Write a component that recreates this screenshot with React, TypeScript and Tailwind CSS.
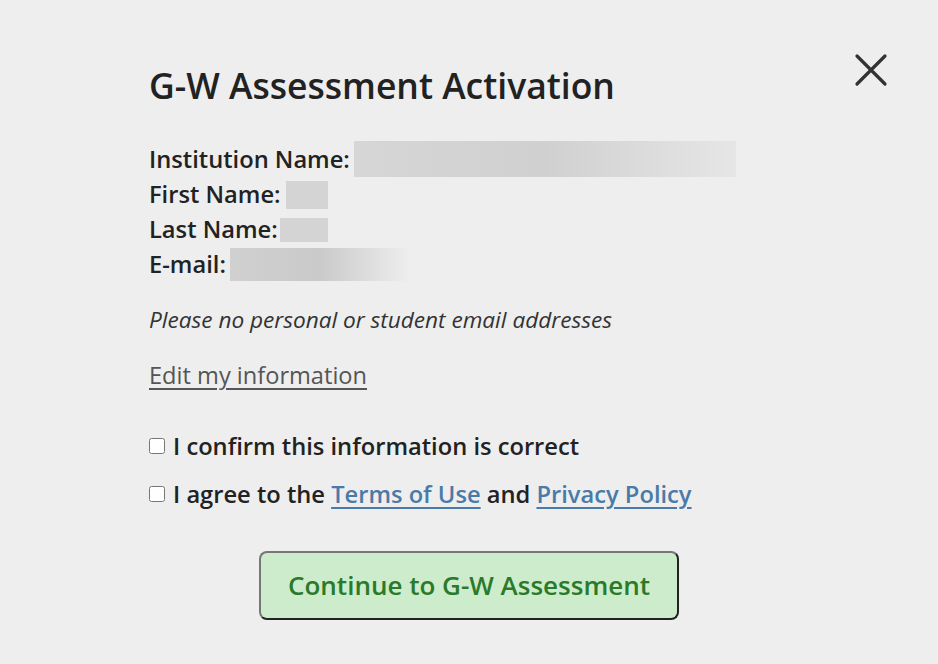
import React from 'react';

export default function App() {
  return (
    <div className="w-[938px] h-[664px] bg-[#eeeeee] text-[#222] font-['Open_Sans',sans-serif] relative overflow-hidden">
      <button className="absolute top-[52px] right-[49px] w-[36px] h-[36px] flex items-center justify-center" aria-label="Close">
        <svg width="34" height="34" viewBox="0 0 34 34" fill="none" stroke="#333" strokeWidth="3.2" strokeLinecap="round">
          <path d="M3 3 L31 31 M31 3 L3 31" />
        </svg>
      </button>

      <div className="pl-[149px] pt-[63px] flex flex-col">
        <h1 className="text-[35.5px] font-semibold leading-[44px] text-[#222]">G-W Assessment Activation</h1>

        <div className="mt-[34px] flex flex-col text-[23.7px] font-semibold leading-[35px]">
          <div className="flex items-center">
            <span>Institution Name:</span>
            <span className="ml-[4px] w-[382px] h-[36px] bg-gradient-to-r from-[#d6d6d6] via-[#d0d0d0] to-[#e6e6e6]" />
          </div>
          <div className="flex items-center">
            <span>First Name:</span>
            <span className="ml-[5px] w-[42px] h-[28px] bg-[#d4d4d4]" />
          </div>
          <div className="flex items-center">
            <span>Last Name:</span>
            <span className="ml-[2px] w-[48px] h-[24px] bg-[#d4d4d4]" />
          </div>
          <div className="flex items-center">
            <span>E-mail:</span>
            <span className="ml-[4px] w-[180px] h-[33px] bg-gradient-to-r from-[#d0d0d0] via-[#cacaca] to-[#eeeeee]" />
          </div>
        </div>

        <p className="mt-[24px] text-[22.6px] italic leading-[28px] text-[#333]">Please no personal or student email addresses</p>

        <a href="#" className="mt-[26px] text-[23.6px] leading-[30px] text-[#555] underline underline-offset-[4px] w-fit">Edit my information</a>

        <label className="mt-[41px] flex items-center gap-[8px] text-[23.7px] font-semibold leading-[30px]">
          <input type="checkbox" className="w-[16px] h-[16px] m-0" />
          <span>I confirm this information is correct</span>
        </label>
        <label className="mt-[18px] flex items-center gap-[8px] text-[23.7px] font-semibold leading-[30px]">
          <input type="checkbox" className="w-[16px] h-[16px] m-0" />
          <span>
            I agree to the <a href="#" className="text-[#4a7aa7] underline underline-offset-[4px]">Terms of Use</a> and{' '}
            <a href="#" className="text-[#4a7aa7] underline underline-offset-[4px]">Privacy Policy</a>
          </span>
        </label>
      </div>

      <div className="flex justify-center mt-[42px]">
        <button className="w-[420px] h-[69px] rounded-[8px] border-2 border-[#222] border-t-[#777] border-l-[#777] bg-[#cdeccb] text-[#2a7a2a] text-[26px] font-semibold">
          Continue to G-W Assessment
        </button>
      </div>
    </div>
  );
}
